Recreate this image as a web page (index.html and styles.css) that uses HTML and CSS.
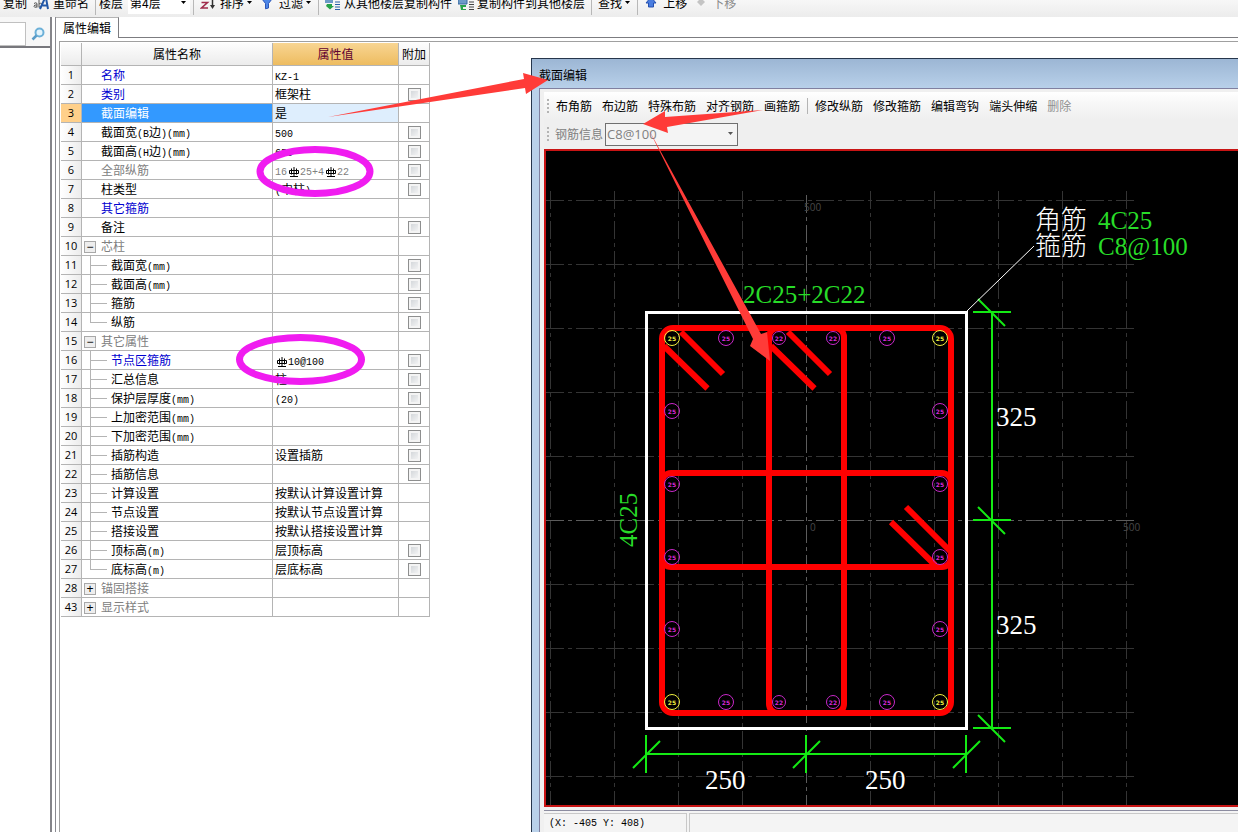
FILE: index.html
```html
<!DOCTYPE html>
<html lang="zh-CN">
<head>
<meta charset="utf-8">
<title>属性编辑</title>
<link rel="stylesheet" href="styles.css">
</head>
<body>
<svg class="defs" width="0" height="0" aria-hidden="true">
  <symbol id="rebar" viewBox="0 0 10 12"><path d="M5 1v10M2.500 2.500v6M7.500 2.500v6M.5 4.500h9v3h-9zM1 10.500h8" fill="none" stroke="currentColor"/></symbol>
  <symbol id="caret" viewBox="0 0 7 4"><path d="M1 0h5L3.500 3z" fill="currentColor"/></symbol>
</svg>
<div class="app">
  <header class="toolbar">
    <div class="toolbar-row">
      <button class="tool">复制</button>
      <button class="tool"><svg width="16" height="16" viewBox="0 0 16 16"><path d="M1 8.500q2-1.500 3 0v4M4 10q-3-.5-3 1.300t3 .5M6 4v8.500M6 9q3-2 3 1t-3 2" fill="none" stroke="#555"/><path d="M7 14l5-11h1l2 11M9.500 10.500h5" fill="none" stroke="#2258a8" stroke-width="2"/></svg>重命名</button>
      <span class="sep"></span>
      <label class="floor">楼层<span class="floor-box"><select class="floor-select"><option>第4层</option></select><svg class="caret" width="7" height="4"><use href="#caret"/></svg></span></label>
      <span class="sep"></span>
      <button class="tool"><svg width="16" height="16" viewBox="0 0 16 16"><path d="M1.500 7.500h6l-6 5.500h6.500" fill="none" stroke="#a02c4c" stroke-width="1.600"/><path d="M12.500 1v11" stroke="#333" stroke-width="1.500"/><path d="M10 10h5l-2.500 4z" fill="#333"/></svg>排序<svg class="caret" width="7" height="4"><use href="#caret"/></svg></button>
      <button class="tool"><svg width="16" height="16" viewBox="0 0 16 16"><path d="M3 4h10L9.500 8.500V13l-3 .8V8.500z" fill="#4c86e8" stroke="#2c56b8"/></svg>过滤<svg class="caret" width="7" height="4"><use href="#caret"/></svg></button>
      <span class="sep"></span>
      <button class="tool wide"><svg width="16" height="16" viewBox="0 0 16 16"><path d="M0 4h8v4H0z" fill="#6c9ac8"/><path d="M10 2h5M10 4.500h5M10 7h5M10 9.500h5M10 12h5M10 14.500h5" stroke="#2860a8"/><path d="M2 9h5v2h2l-4 3.500L1 11z" fill="#27a24a"/></svg>从其他楼层复制构件</button>
      <button class="tool wide"><svg width="16" height="16" viewBox="0 0 16 16"><path d="M0 4h9v5H0z" fill="#6c9ac8" stroke="#3868a0"/><path d="M11 2h5M11 4.500h5M11 7h5M11 9.500h5M11 12h5M11 14.500h5" stroke="#444"/><path d="M2 10h6v2H5v2h3v1H3z" fill="#27a24a"/></svg>复制构件到其他楼层</button>
      <span class="sep"></span>
      <button class="tool">查找<svg class="caret" width="7" height="4"><use href="#caret"/></svg></button>
      <span class="sep"></span>
      <button class="tool wide"><svg width="16" height="16" viewBox="0 0 16 16"><path d="M7 2l5 6H9.500v4h-5V8H2z" fill="#4a7de0" stroke="#2450b0"/></svg>上移</button>
      <button class="tool wide" disabled><svg width="16" height="16" viewBox="0 0 16 16"><path d="M4 7l4-4 4 4-4 4z" fill="#c4c4c4"/></svg>下移</button>
    </div>
  </header>

  <div class="main">
    <aside class="side">
      <div class="search">
        <input class="search-input" type="text" aria-label="搜索">
        <button class="search-btn" aria-label="搜索"><svg width="14" height="14" viewBox="0 0 14 14"><circle cx="8.500" cy="5.500" r="4" fill="#e4f4fc" stroke="#6cb0d8" stroke-width="2"/><path d="M5.500 8.500L1.500 12.500" stroke="#5a9cc8" stroke-width="2.500"/></svg></button>
      </div>
      <div class="side-list"></div>
    </aside>

    <main class="panel">
      <nav class="tabs"><button class="tab">属性编辑</button></nav>
      <div class="panel-body">
        <table class="props">
          <colgroup><col class="c-num"><col class="c-name"><col class="c-val"><col class="c-add"></colgroup>
          <thead><tr><th></th><th>属性名称</th><th class="active">属性值</th><th>附加</th></tr></thead>
          <tbody>
            <tr><th>1</th><td class="name link">名称</td><td><span class="mono">KZ-1</span></td><td></td></tr>
            <tr><th>2</th><td class="name link">类别</td><td>框架柱</td><td><input type="checkbox" aria-label="附加 类别"></td></tr>
            <tr class="selected"><th>3</th><td class="name">截面编辑</td><td>是</td><td></td></tr>
            <tr><th>4</th><td class="name">截面宽<span class="mono">(B</span>边<span class="mono">)(mm)</span></td><td><span class="mono">500</span></td><td><input type="checkbox" aria-label="附加 截面宽"></td></tr>
            <tr><th>5</th><td class="name">截面高<span class="mono">(H</span>边<span class="mono">)(mm)</span></td><td><span class="mono">650</span></td><td><input type="checkbox" aria-label="附加 截面高"></td></tr>
            <tr><th>6</th><td class="name muted">全部纵筋</td><td class="muted"><span class="mono">16<svg class="rebar"><use href="#rebar"/></svg>25+4<svg class="rebar"><use href="#rebar"/></svg>22</span></td><td><input type="checkbox" aria-label="附加 全部纵筋"></td></tr>
            <tr><th>7</th><td class="name">柱类型</td><td><span class="mono">(</span>中柱<span class="mono">)</span></td><td><input type="checkbox" aria-label="附加 柱类型"></td></tr>
            <tr><th>8</th><td class="name link">其它箍筋</td><td></td><td></td></tr>
            <tr><th>9</th><td class="name">备注</td><td></td><td><input type="checkbox" aria-label="附加 备注"></td></tr>
            <tr><th>10</th><td class="group"><button class="toggle" aria-label="折叠">−</button>芯柱</td><td></td><td></td></tr>
            <tr><th>11</th><td class="child">截面宽<span class="mono">(mm)</span></td><td></td><td><input type="checkbox" aria-label="附加 芯柱截面宽"></td></tr>
            <tr><th>12</th><td class="child">截面高<span class="mono">(mm)</span></td><td></td><td><input type="checkbox" aria-label="附加 芯柱截面高"></td></tr>
            <tr><th>13</th><td class="child">箍筋</td><td></td><td><input type="checkbox" aria-label="附加 箍筋"></td></tr>
            <tr><th>14</th><td class="child last">纵筋</td><td></td><td><input type="checkbox" aria-label="附加 纵筋"></td></tr>
            <tr><th>15</th><td class="group"><button class="toggle" aria-label="折叠">−</button>其它属性</td><td></td><td></td></tr>
            <tr><th>16</th><td class="child link">节点区箍筋</td><td><span class="mono"><svg class="rebar"><use href="#rebar"/></svg>10@100</span></td><td><input type="checkbox" aria-label="附加 节点区箍筋"></td></tr>
            <tr><th>17</th><td class="child">汇总信息</td><td>柱</td><td><input type="checkbox" aria-label="附加 汇总信息"></td></tr>
            <tr><th>18</th><td class="child">保护层厚度<span class="mono">(mm)</span></td><td><span class="mono">(20)</span></td><td><input type="checkbox" aria-label="附加 保护层厚度"></td></tr>
            <tr><th>19</th><td class="child">上加密范围<span class="mono">(mm)</span></td><td></td><td><input type="checkbox" aria-label="附加 上加密范围"></td></tr>
            <tr><th>20</th><td class="child">下加密范围<span class="mono">(mm)</span></td><td></td><td><input type="checkbox" aria-label="附加 下加密范围"></td></tr>
            <tr><th>21</th><td class="child">插筋构造</td><td>设置插筋</td><td><input type="checkbox" aria-label="附加 插筋构造"></td></tr>
            <tr><th>22</th><td class="child">插筋信息</td><td></td><td><input type="checkbox" aria-label="附加 插筋信息"></td></tr>
            <tr><th>23</th><td class="child">计算设置</td><td>按默认计算设置计算</td><td></td></tr>
            <tr><th>24</th><td class="child">节点设置</td><td>按默认节点设置计算</td><td></td></tr>
            <tr><th>25</th><td class="child">搭接设置</td><td>按默认搭接设置计算</td><td></td></tr>
            <tr><th>26</th><td class="child">顶标高<span class="mono">(m)</span></td><td>层顶标高</td><td><input type="checkbox" aria-label="附加 顶标高"></td></tr>
            <tr><th>27</th><td class="child last">底标高<span class="mono">(m)</span></td><td>层底标高</td><td><input type="checkbox" aria-label="附加 底标高"></td></tr>
            <tr><th>28</th><td class="group"><button class="toggle" aria-label="展开">+</button>锚固搭接</td><td></td><td></td></tr>
            <tr><th>43</th><td class="group"><button class="toggle" aria-label="展开">+</button>显示样式</td><td></td><td></td></tr>
          </tbody>
        </table>
      </div>
    </main>
  </div>

  <section class="dialog" aria-label="截面编辑">
    <h1 class="dialog-title">截面编辑</h1>
    <div class="dialog-body">
      <div class="bars">
        <div class="bar">
          <span class="grip"></span>
          <button>布角筋</button><button>布边筋</button><button>特殊布筋</button><button>对齐钢筋</button><button>画箍筋</button>
          <span class="bar-sep"></span>
          <button>修改纵筋</button><button>修改箍筋</button><button>编辑弯钩</button><button>端头伸缩</button><button disabled>删除</button>
        </div>
        <div class="bar info">
          <span class="grip"></span>
          <label for="rebar-info">钢筋信息</label>
          <span class="combo"><select id="rebar-info"><option>C8@100</option></select><svg class="caret" width="7" height="4"><use href="#caret"/></svg></span>
        </div>
      </div>
      <div class="canvas">
        <svg class="drawing" width="692" height="654" viewBox="546 151 692 654">
          <g class="grid">
            <path d="M550.500 191V805M614.500 191V805M678.500 191V805M742.500 191V805M870.500 191V805M934.500 191V805M998.500 191V805M1062.500 191V805M1126.500 191V805"/>
            <path d="M546 200.500H1137M546 264.500H1137M546 328.500H1137M546 392.500H1137M546 456.500H1137M546 584.500H1137M546 648.500H1137M546 712.500H1137M546 776.500H1137"/>
            <path class="axis" d="M806.500 195V805M546 520.500H1137"/>
          </g>
          <g class="scale"><text x="804" y="211">500</text><text x="810" y="531">0</text><text x="1123" y="531">500</text></g>
          <rect class="outline" x="646.500" y="312.500" width="320" height="416"/>
          <g class="stirrup">
            <rect x="662" y="328" width="289" height="385" rx="11"/>
            <rect x="769" y="328" width="75" height="385" rx="9"/>
            <rect x="662" y="473" width="289" height="94" rx="9"/>
            <path d="M664 346L707.500 388.500M681 332L723 374M771 346L814.500 388.500M788 332L830 374M891 522L935 565M906 507L950 551"/>
          </g>
          <g class="bar-25">
            <circle cx="726" cy="338" r="7.500"/><circle cx="887" cy="338" r="7.500"/>
            <circle cx="672" cy="411" r="7.500"/><circle cx="672" cy="484" r="7.500"/><circle cx="672" cy="557" r="7.500"/><circle cx="672" cy="629" r="7.500"/>
            <circle cx="940" cy="411" r="7.500"/><circle cx="940" cy="484" r="7.500"/><circle cx="940" cy="557" r="7.500"/><circle cx="940" cy="629" r="7.500"/>
            <circle cx="726" cy="702" r="7.500"/><circle cx="887" cy="702" r="7.500"/>
            <circle cx="779" cy="338" r="6.500"/><circle cx="833" cy="338" r="6.500"/><circle cx="779" cy="702" r="6.500"/><circle cx="833" cy="702" r="6.500"/>
            <text x="726" y="341">25</text><text x="887" y="341">25</text>
            <text x="672" y="414">25</text><text x="672" y="487">25</text><text x="672" y="560">25</text><text x="672" y="632">25</text>
            <text x="940" y="414">25</text><text x="940" y="487">25</text><text x="940" y="560">25</text><text x="940" y="632">25</text>
            <text x="726" y="705">25</text><text x="887" y="705">25</text>
            <text x="779" y="341">22</text><text x="833" y="341">22</text><text x="779" y="705">22</text><text x="833" y="705">22</text>
          </g>
          <g class="bar-corner">
            <circle cx="672" cy="338" r="7.500"/><circle cx="940" cy="338" r="7.500"/><circle cx="672" cy="702" r="7.500"/><circle cx="940" cy="702" r="7.500"/>
            <text x="672" y="341">25</text><text x="940" y="341">25</text><text x="672" y="705">25</text><text x="940" y="705">25</text>
          </g>
          <g class="dims">
            <path d="M646 754H966M646 735V773M806 735V773M966 735V773M633 768L660 741M793 768L820 741M953 768L980 741"/>
            <path d="M992 312V728M973 312H1011M973 520H1011M973 728H1011M978 299L1005 326M978 507L1005 534M978 715L1005 742"/>
          </g>
          <path class="leader" d="M967 311L1034 246"/>
          <g class="size"><text x="705" y="789">250</text><text x="865" y="789">250</text><text x="996" y="426">325</text><text x="996" y="634">325</text></g>
          <g class="cjk"><text x="1035" y="229">角筋</text><text x="1035" y="255">箍筋</text></g>
          <g class="spec"><text x="743" y="303">2C25+2C22</text><text x="1098" y="229">4C25</text><text x="1098" y="255">C8@100</text><text transform="translate(637 547) rotate(-90)">4C25</text></g>
        </svg>
      </div>
      <footer class="status"><span class="coords mono">(X: -405 Y: 408)</span><span class="status-rest"></span></footer>
    </div>
  </section>

  <svg class="marks" width="1238" height="832" viewBox="0 0 1238 832" aria-hidden="true">
    <g fill="none" stroke="#f01cf0" stroke-width="7"><ellipse cx="315" cy="171.500" rx="55" ry="22"/><ellipse cx="300.500" cy="359.500" rx="61" ry="22"/></g>
    <g fill="#ff3b38"><path d="M328 117L524 79L523 73L548 80L526 94L525 88z"/><path d="M763 110L665 117V111L643 124L668 133L667 127z"/><path d="M649 130L761 334L767 332L770 361L750 346L753 339z"/></g>
  </svg>
</div>
</body>
</html>
```
FILE: styles.css
```css
* { box-sizing: border-box; }
body {
  margin: 0;
  font: 12px/18px "Noto Sans CJK SC", sans-serif;
  color: #000;
  background: #fff;
}
button, input, select { font: inherit; color: inherit; }
button { border: 0; padding: 0; background: none; white-space: nowrap; }
.defs { position: absolute; }
.mono { font-family: "Liberation Mono", "Noto Sans CJK SC", monospace; font-size: 10px; line-height: 1; }
.app { position: relative; height: 100vh; overflow: hidden; display: flex; flex-direction: column; }
.caret { flex: none; }

.toolbar {
  height: 17px;
  flex: none;
  overflow: hidden;
  display: flex;
  align-items: flex-end;
  background: linear-gradient(#f7f7f7, #ececec);
}
.toolbar-row { height: 28px; display: flex; align-items: center; white-space: nowrap; }
.tool { display: flex; align-items: center; gap: 4px; padding: 0 3px; }
.tool .caret { margin-left: -2px; }
.tool.wide { gap: 3px; }
.tool:disabled { color: #8a8a8a; }
.sep { width: 1px; height: 24px; margin: 0 3px; background: #b8b8b8; }
.floor { display: flex; align-items: center; gap: 5px; }
.floor-box { display: flex; align-items: center; width: 62px; height: 22px; padding-right: 3px; background: #fff; }
.floor-select { flex: 1; min-width: 0; border: 0; padding: 0 2px; appearance: none; background: none; }

.main { flex: 1; min-height: 0; display: flex; }
.side { width: 52px; flex: none; display: flex; flex-direction: column; border-right: 2px solid #85858a; background: #fff; }
.search { height: 31px; display: flex; align-items: center; gap: 5px; border-bottom: 2px solid #77777c; background: #f7f7f7; padding-top: 4px; }
.search-input { width: 26px; height: 24px; border: 1px solid #c0c0c0; border-left: 0; background: #fff; }
.search-btn { display: flex; }
.side-list { flex: 1; }

.panel { flex: 1; min-width: 0; margin-left: 3px; border-left: 1px solid #8a8a90; display: flex; flex-direction: column; }
.tabs { display: flex; height: 21px; flex: none; }
.tabs::after { content: ""; flex: 1; border-bottom: 1px solid #7c7c80; }
.tab { width: 63px; border-right: 1px solid #7c7c80; border-top: 1px solid #b4b4b4; }
.panel-body { flex: 1; min-height: 0; margin: 3px 0 0 3px; padding: 1px 0 0 1px; border-top: 1px solid #a0a0a0; border-left: 1px solid #a0a0a0; }

.props { width: 369px; table-layout: fixed; border-spacing: 0; }
.c-num { width: 21px; }
.c-name { width: 191px; }
.c-val { width: 126px; }
.c-add { width: 31px; }
.props th, .props td {
  height: 19px;
  padding: 0;
  line-height: 18px;
  white-space: nowrap;
  border: solid #b4b4b4;
  border-width: 0 1px 1px 0;
}
.props th { font-weight: normal; text-align: center; background: linear-gradient(90deg, #fff, #ececec); }
.props thead th { height: 23px; background: linear-gradient(#fdfdfd, #ececec); }
.props thead .active { color: #600030; background: linear-gradient(#f8d592, #edbc60); }
.props tbody th { font-family: "Open Sans", sans-serif; font-size: 11px; }
.props td { padding-left: 2px; }
.props td:last-child { padding: 0; text-align: center; }
.props .name { padding-left: 19px; }
.props .link { color: #0000d0; }
.props .muted, .props .group { color: #808080; }
.props .child {
  padding-left: 29px;
  background: linear-gradient(#b4b4b4, #b4b4b4) 8px 0 / 1px 100% no-repeat, linear-gradient(#b4b4b4, #b4b4b4) 8px 9px / 17px 1px no-repeat;
}
.props .last { background-size: 1px 10px, 17px 1px; }
.toggle {
  width: 12px;
  height: 12px;
  margin: 0 5px 0 0;
  border: 1px solid #a8a8a8;
  background: #eee;
  color: #000;
  font: 12px/10px "Liberation Sans", sans-serif;
  vertical-align: baseline;
}
.selected th { background: #ffd08a; }
.selected .name { color: #fff; background: #3399ff; }
.selected td:nth-child(3) { background: #deeefd; }
.props input {
  appearance: none;
  display: block;
  width: 13px;
  height: 13px;
  margin: 0 auto;
  border: 1px solid #8e8f8f;
  background: linear-gradient(135deg, #ccd0d4, #fafafa);
  box-shadow: inset 0 0 0 2px #f4f4f4;
}
.rebar { width: 10px; height: 12px; margin: 0 1px 0 2px; color: #000; vertical-align: -3px; }

.dialog {
  position: absolute;
  inset: 58px 0 0 531px;
  display: flex;
  flex-direction: column;
  padding: 2px 0 0 7px;
  border: solid #26364c;
  border-width: 1px 0 0 1px;
  background: linear-gradient(#9cb6d4, #b9d1ea 30px);
}
.dialog-title { margin: 0; height: 27px; font-size: 12px; font-weight: normal; line-height: 28px; }
.dialog-body { flex: 1; min-height: 0; display: flex; flex-direction: column; border: solid #8080a0; border-width: 1px 0 0 1px; padding: 3px 0 0 4px; background: #f0f0f0; }
.bars { height: 57px; flex: none; background: linear-gradient(#fff, #f8f8f8 10px, #efefef 28px); }
.bar { height: 28px; display: flex; align-items: center; gap: 10px; padding-left: 3px; }
.grip { width: 2px; height: 15px; margin-right: -3px; background: repeating-linear-gradient(#b4b4b4 0 2px, transparent 2px 4px); }
.bar-sep { width: 1px; height: 16px; margin: 0 -3px; background: #b4b4b4; }
.bar button:disabled { color: #909090; }
.info { gap: 2px; color: #808080; }
.info .grip { margin-right: 4px; }
.combo { width: 133px; height: 23px; display: flex; align-items: center; padding-right: 3px; border: 1px solid #707070; background: #f4f4f4; }
.combo select { flex: 1; min-width: 0; border: 0; padding: 0 1px; appearance: none; background: none; font: 13px/18px "Open Sans", sans-serif; }
.combo .caret { color: #555; }

.canvas { flex: 1; min-height: 0; overflow: hidden; border: solid #c81414; border-width: 2px 0 2px 2px; background: #000; }
.drawing { display: block; }
.grid path { fill: none; stroke: #343434; stroke-dasharray: 18 4 4 4; }
.grid .axis { stroke: #5c5c5c; }
.scale { font: 10px "Open Sans", sans-serif; fill: #484848; }
.outline { fill: none; stroke: #fff; stroke-width: 3; }
.stirrup { fill: none; stroke: #f00; stroke-width: 6; }
.bar-25 circle { fill: none; stroke: #c828c8; }
.bar-25 text { fill: #d828d8; }
.bar-corner circle { fill: none; stroke: #f0f040; }
.bar-corner text { fill: #f0f040; }
.bar-25 text, .bar-corner text { font: bold 6px "DejaVu Sans", sans-serif; text-anchor: middle; }
.dims { fill: none; stroke: #14ea14; stroke-width: 2; }
.leader { stroke: #fff; }
.size { font: 27px "Liberation Serif", serif; fill: #fff; }
.cjk { font: 300 26px "Noto Sans CJK SC", sans-serif; fill: #fff; }
.spec { font: 25px "Liberation Serif", serif; fill: #28dc28; }

.status { height: 22px; flex: none; margin-top: 3px; display: flex; gap: 2px; padding-top: 2px; border-top: 1px solid #8c8ca0; background: #f4f4f4; }
.coords { width: 143px; padding-left: 5px; border: solid #c8c8c8; border-width: 1px 1px 0 0; line-height: 20px; }
.status-rest { flex: 1; border: solid #c8c8c8; border-width: 1px 0 0 1px; }

.marks { position: absolute; top: 0; left: 0; pointer-events: none; }
```
